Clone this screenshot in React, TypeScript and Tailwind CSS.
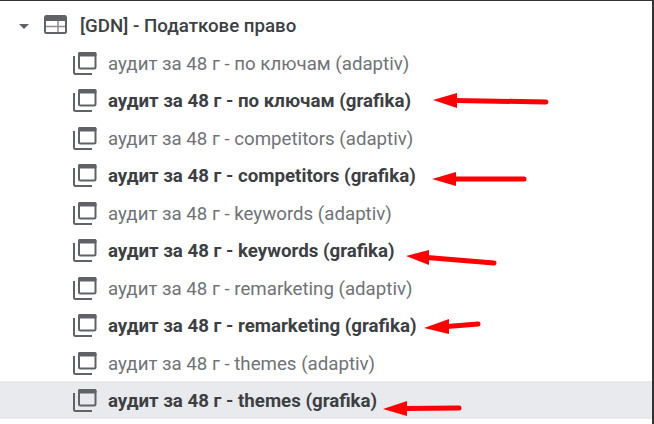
const rows = [
  { label: "аудит за 48 г - по ключам (adaptiv)" },
  { label: "аудит за 48 г - по ключам (grafika)", bold: true },
  { label: "аудит за 48 г - competitors (adaptiv)" },
  { label: "аудит за 48 г - competitors (grafika)", bold: true },
  { label: "аудит за 48 г - keywords (adaptiv)" },
  { label: "аудит за 48 г - keywords (grafika)", bold: true },
  { label: "аудит за 48 г - remarketing (adaptiv)" },
  { label: "аудит за 48 г - remarketing (grafika)", bold: true },
  { label: "аудит за 48 г - themes (adaptiv)" },
  { label: "аудит за 48 г - themes (grafika)", bold: true, selected: true },
]

// tip x/y, head back x, head top/bottom y, tail x/y
const arrows = [
  [433, 100, 457, 93, 108, 546, 102],
  [432, 179, 456, 172, 186, 524, 179],
  [406, 256, 429, 250, 265, 494, 263],
  [424, 328, 449, 319, 334, 478, 324],
  [383, 409, 407, 401, 416, 459, 408],
]

function CopyIcon() {
  return (
    <svg width="26" height="26" viewBox="0 0 26 26" fill="none" className="shrink-0">
      <path d="M2 5v16.5a1.5 1.5 0 0 0 1.5 1.5H20" stroke="#5f6368" strokeWidth="2" />
      <rect x="7" y="2" width="16.5" height="15.5" rx="1.5" stroke="#5f6368" strokeWidth="2" />
      <rect x="6" y="1" width="18.5" height="4.5" rx="1.5" fill="#5f6368" />
    </svg>
  )
}

function TableIcon() {
  return (
    <svg width="23" height="19" viewBox="0 0 23 19" fill="none" className="shrink-0">
      <rect x="1" y="1" width="21" height="17" rx="1.5" stroke="#5f6368" strokeWidth="2" />
      <rect x="1" y="1" width="21" height="5" fill="#5f6368" />
      <path d="M2 11.5h19M14 6v11" stroke="#8a8d91" strokeWidth="1.5" />
    </svg>
  )
}

export default function App() {
  return (
    <div className="relative h-[424px] w-[654px] overflow-hidden border-r-2 border-[#333333] bg-white font-['Roboto',sans-serif]">
      <div className="h-[1px] bg-[#333333]" />
      {/* Header */}
      <div className="flex h-[50px] items-center pl-[19px]">
        <div className="h-0 w-0 border-x-[5px] border-t-[5px] border-x-transparent border-t-[#5f6368]" />
        <div className="mb-[3px] ml-[15px]">
          <TableIcon />
        </div>
        <span className="ml-[13px] text-[18.7px] font-medium whitespace-nowrap text-[#3c4043]">
          [GDN] - Податкове право
        </span>
      </div>

      {/* Rows */}
      <div className="-mt-[7.5px]">
        {rows.map((row) => (
          <div
            key={row.label}
            className={`flex h-[37.5px] items-center pt-[3px] pl-[72px] ${row.selected ? "bg-[#e8eaed]" : ""}`}
          >
            <CopyIcon />
            <span
              className={`ml-[10px] text-[18.7px] whitespace-nowrap ${
                row.bold ? "font-bold text-[#3c4043]" : "text-[#6f7377]"
              }`}
            >
              {row.label}
            </span>
          </div>
        ))}
      </div>

      {/* Hand drawn annotations */}
      <svg width="654" height="424" className="pointer-events-none absolute top-0 left-0">
        {arrows.map(([tx, ty, bx, top, bottom, ex, ey], i) => (
          <g key={i}>
            <polygon points={`${tx},${ty} ${bx},${top} ${bx},${bottom}`} fill="#fe0000" />
            <line
              x1={bx - 2}
              y1={(top + bottom) / 2}
              x2={ex}
              y2={ey}
              stroke="#fe0000"
              strokeWidth="5"
              strokeLinecap="round"
            />
          </g>
        ))}
      </svg>
    </div>
  )
}
